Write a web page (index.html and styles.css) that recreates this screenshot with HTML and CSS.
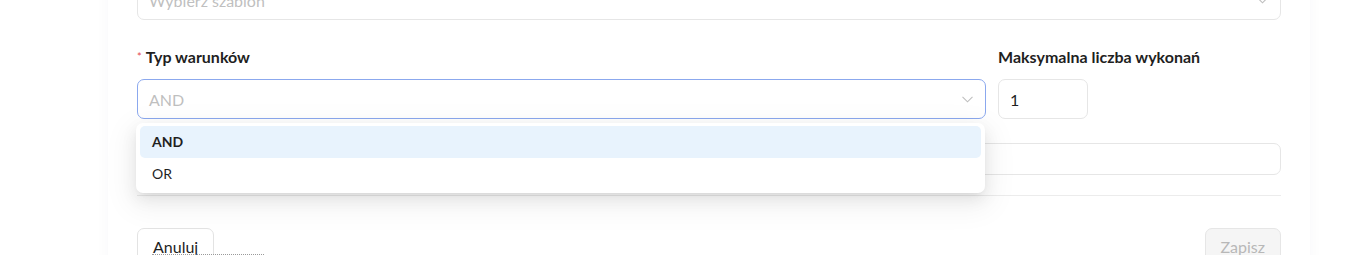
FILE: index.html
```html
<!DOCTYPE html>
<html lang="pl">
<head>
<meta charset="utf-8">
<link rel="stylesheet" href="styles.css">
</head>
<body>
<div class="card">
  <div class="field top-field">
    <div class="input select">
      <span class="placeholder">Wybierz szablon</span>
      <svg class="chev" width="11" height="7" viewBox="0 0 11 7"><path d="M0.5 0.8 L5.5 5.8 L10.5 0.8" fill="none" stroke="#bfbfbf" stroke-width="1.1"/></svg>
    </div>
  </div>
  <div class="row">
    <div class="field sel-field">
      <label class="label"><span class="req">*</span>Typ warunków</label>
      <div class="input select focused">
        <span class="placeholder">AND</span>
        <svg class="chev" width="11" height="7" viewBox="0 0 11 7"><path d="M0.5 0.8 L5.5 5.8 L10.5 0.8" fill="none" stroke="#bfbfbf" stroke-width="1.1"/></svg>
      </div>
      <div class="dropdown">
        <div class="opt active">AND</div>
        <div class="opt">OR</div>
      </div>
    </div>
    <div class="field">
      <label class="label">Maksymalna liczba wykonań</label>
      <div class="input num">1</div>
    </div>
  </div>
  <div class="input small"></div>
  <div class="divider"></div>
  <div class="actions">
    <button class="btn">Anuluj</button>
    <button class="btn disabled">Zapisz</button>
    <span class="dots"></span>
  </div>
</div>
</body>
</html>
```
FILE: styles.css
```css
* { box-sizing: border-box; }
html, body { margin: 0; background: #ffffff; height: 255px; overflow: hidden; }
body { font-family: Lato, "Open Sans", sans-serif; color: #1f1f1f; }
.card {
  margin: -20px 0 0 108px;
  width: 1202px;
  padding: 0 29px;
  background: #fff;
  box-shadow: 0 0 14px rgba(30, 50, 90, 0.035);
  height: 300px;
  position: relative;
}
.input {
  border: 1px solid #e6e6e6;
  border-radius: 7px;
  height: 40px;
  display: flex;
  align-items: center;
  padding: 0 11px;
  font-size: 16px;
  background: #fff;
}
.select { justify-content: space-between; }
.placeholder { color: #bfbfbf; }
.focused { border-color: #8ba8ee; }
.chev { margin-right: 1px; margin-top: 1px; }
.row {
  display: grid;
  grid-template-columns: 849px 1fr;
  column-gap: 12px;
  margin-top: 26px;
}
.sel-field { position: relative; }
.label {
  display: block;
  font-size: 16px;
  font-weight: 700;
  line-height: 22px;
  margin-bottom: 11px;
  color: #1f1f1f;
}
.req { color: #e5484d; font-size: 11px; margin-right: 4px; font-weight: 400; vertical-align: 2px; }
.num { width: 90px; color: #1f1f1f; }
.dropdown {
  position: absolute;
  top: 77px;
  left: -1px;
  width: 849px;
  background: #fff;
  border-radius: 7px;
  padding: 3px 4px;
  box-shadow: 0 6px 16px rgba(0, 0, 0, 0.08), 0 3px 6px -4px rgba(0, 0, 0, 0.12), 0 9px 28px 8px rgba(0, 0, 0, 0.05);
  z-index: 5;
}
.opt {
  height: 32px;
  line-height: 32px;
  padding: 0 12px;
  font-size: 14px;
  border-radius: 5px;
  color: #1f1f1f;
}
.opt.active { background: #e8f3fd; font-weight: 700; }
.small { height: 32px; margin-top: 24px; }
.divider { border-top: 1px solid #ececec; margin-top: 20px; }
.actions {
  display: flex;
  justify-content: space-between;
  margin-top: 32px;
  position: relative;
}
.btn {
  font-family: Lato, "Open Sans", sans-serif;
  font-size: 16px;
  height: 36px;
  padding: 0 15px;
  border: 1px solid #e3e3e3;
  border-radius: 7px;
  background: #fff;
  color: #1f1f1f;
  line-height: 36px;
}
.btn.disabled { background: #f5f5f5; color: #b8b8b8; border-color: #e6e6e6; }
.dots {
  position: absolute;
  left: 15px;
  top: 26px;
  width: 112px;
  border-top: 1px dotted #9a9a9a;
}
```
